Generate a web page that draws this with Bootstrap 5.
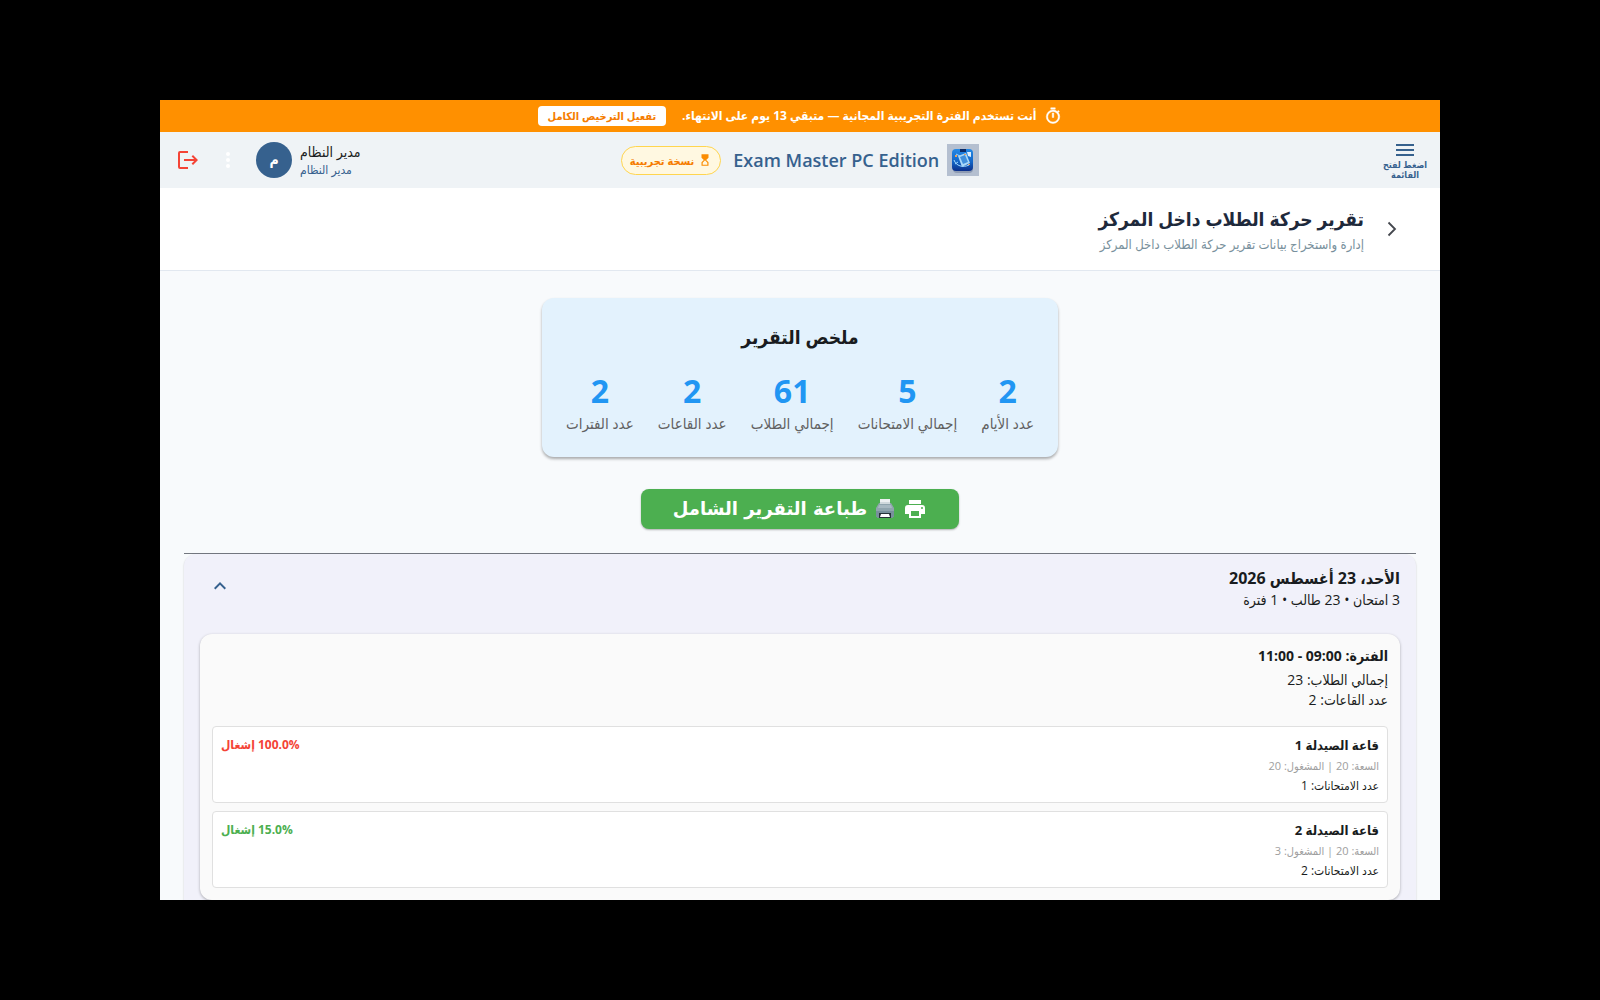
<!DOCTYPE html>
<html lang="ar" dir="rtl">
<head>
<meta charset="utf-8">
<meta name="viewport" content="width=device-width, initial-scale=1">
<title>Exam Master PC Edition</title>
<link href="https://cdn.jsdelivr.net/npm/bootstrap@5.3.0/dist/css/bootstrap.min.css" rel="stylesheet">
<style>
  :root { --brand: #36618e; --ink: #191c20; }
  body { background: #000; color: var(--ink); font-family: "Open Sans", "DejaVu Sans Condensed", "DejaVu Sans", sans-serif; font-size: 14px; line-height: 20px; padding: 10vh 10vw; height: 100vh; overflow: hidden; }
  button { color: inherit; }
  svg { display: block; flex: none; }
  .app-window { height: 80vh; background: #f8fafc; }
  .trial-bar { background: #ff9000; color: #fff; height: 32px; font-size: 12px; font-weight: 700; }
  .activate-btn { background: #fff; color: #f57c00; font-size: 11px; font-weight: 700; line-height: 20px; padding: 0 10px; border: 0; border-radius: 4px; }
  .top-bar { background: #eff3f6; height: 56px; }
  .menu-btn { color: var(--brand); font-size: 9px; font-weight: 700; line-height: 10px; width: 70px; }
  .brand-name { color: var(--brand); font-size: 18px; font-weight: 600; line-height: 32px; }
  .trial-tag { background: #fff8e1; border: 1px solid #ffd54f; border-radius: 15px; color: #f57c00; font-size: 11px; font-weight: 700; line-height: 27px; padding: 0 8px; }
  .user-avatar { width: 36px; height: 36px; background: var(--brand); font-size: 14px; }
  .user-role { color: var(--brand); font-size: 12px; line-height: 16px; }
  .page-head { background: #fff; border-bottom: 1px solid #e2e8f0; padding: 16px 36px; }
  .page-title { color: #1e293b; font-size: 19px; font-weight: 700; line-height: 30px; }
  .page-sub { color: #78909c; font-size: 13px; }
  .summary-card { background: #e3f2fd; border-radius: 12px; width: 516px; max-width: 100%; padding: 24px; margin: 27px 0 32px; box-shadow: 0 2px 3px rgba(0,0,0,.32); }
  .summary-title { font-size: 19px; font-weight: 700; line-height: 30px; }
  .stat-value { color: #2196f3; font-size: 32px; font-weight: 700; line-height: 45px; }
  .stat-label { color: #616161; font-size: 15px; }
  .print-btn { background: #4caf50; color: #fff; border: 0; border-radius: 8px; font-family: "DejaVu Sans", sans-serif; font-size: 18px; font-weight: 700; line-height: 40px; padding: 0 32px; box-shadow: 0 1px 2px rgba(0,0,0,.3); }
  .day-list { border-top: 1px solid #73777f; }
  .day-panel { background: #f1f1fa; border-radius: 12px; padding: 12px 16px 16px; box-shadow: 0 1px 2px rgba(0,0,0,.2); }
  .day-title { font-size: 16px; font-weight: 700; line-height: 24px; }
  .slot-card { background: #fafafa; border-radius: 12px; padding: 12px; box-shadow: 0 1px 3px rgba(0,0,0,.3); }
  .slot-title { font-size: 14px; font-weight: 700; line-height: 20px; }
  .fine-text { font-size: 14px; }
  .room-box { background: #fff; border: 1px solid #e0e0e0; border-radius: 4px; padding: 8px 8px 6px; }
  .room-title { font-size: 13px; font-weight: 700; line-height: 21px; }
  .room-line { font-size: 12px; }
  .room-seats { color: #9e9e9e; font-size: 11px; }
  .load-text { font-size: 12px; font-weight: 700; }
  .load-full { color: #f44336; }
  .load-low { color: #4caf50; }
</style>
<script src="https://cdn.jsdelivr.net/npm/bootstrap@5.3.0/dist/js/bootstrap.bundle.min.js"></script>
</head>
<body>
<div class="app-window overflow-hidden">
  <div class="trial-bar d-flex justify-content-center align-items-center gap-3">
    <div class="d-flex align-items-center gap-2">
      <svg width="18" height="18" viewBox="0 0 24 24" fill="#fff" stroke="#fff" stroke-width=".6"><path d="M15 1H9v2h6V1zm-4 13h2V8h-2v6zm8.030-6.610 1.420-1.420c-.43-.51-.9-.99-1.410-1.410l-1.420 1.420A8.960 8.960 0 0 0 12 4a9 9 0 1 0 9 9c0-2.120-.74-4.070-1.970-5.610zM12 20a7 7 0 1 1 0-14 7 7 0 0 1 0 14z"/></svg>
      <span>أنت تستخدم الفترة التجريبية المجانية — متبقي 13 يوم على الانتهاء.</span>
    </div>
    <button type="button" class="activate-btn">تفعيل الترخيص الكامل</button>
  </div>

  <header class="top-bar d-flex align-items-center">
    <div class="col">
      <button type="button" class="menu-btn btn p-0 pt-1 border-0 d-flex flex-column align-items-center gap-1">
        <svg width="18" height="12" viewBox="0 0 18 12" fill="#36618e"><path d="M0 0h18v2H0zM0 5h18v2H0zM0 10h18v2H0z"/></svg>
        <span>اضغط لفتح<br>القائمة</span>
      </button>
    </div>
    <div class="d-flex align-items-center gap-2">
      <svg width="32" height="32" viewBox="0 0 32 32">
        <defs><linearGradient id="tile" x1="0" y1="0" x2="0" y2="1"><stop offset="0" stop-color="#2389e6"/><stop offset=".6" stop-color="#1263c4"/><stop offset="1" stop-color="#0b2f8a"/></linearGradient></defs>
        <path fill="#b4bfd0" d="M0 0h32v32H0z"/>
        <rect x="6" y="7" width="20" height="22" rx="4" fill="#8e9bb3"/>
        <rect x="5" y="5" width="21" height="22" rx="4" fill="url(#tile)"/>
        <path fill="#0b2a66" d="M13 5h6v3h-6z"/>
        <path fill="#a9d8f8" d="m11 12 8-3 4 10-8 4z"/>
        <path fill="#3f8fdc" d="m13 13 5-2 3 7-5 2z"/>
        <path fill="#dbeeff" d="M20 8h4v5l-3-1z"/>
        <path fill="#e9a15a" d="M8 11h2v2H8zM21 20h2v1h-2zM17 10h2v1h-2z"/>
        <path stroke="#9fd8ff" fill="none" d="M7 16c2 6 9 8 15 5M9 10l4 2M8 20l3-2"/>
      </svg>
      <span class="brand-name" dir="ltr">Exam Master PC Edition</span>
      <span class="trial-tag d-flex align-items-center gap-1 me-1">
        <svg width="14" height="14" viewBox="0 0 24 24" fill="#fb8c00"><path d="M18 22v-6l-4-4 4-4V2H6v6l4 4-4 4v6h12zM8 16.500l4-4 4 4V20H8z"/></svg>
        <span>نسخة تجريبية</span>
      </span>
    </div>
    <div class="col d-flex justify-content-end align-items-center">
      <div class="d-flex flex-column align-items-end">
        <span>مدير النظام</span>
        <span class="user-role">مدير النظام</span>
      </div>
      <span class="user-avatar rounded-circle text-white fw-bold d-flex justify-content-center align-items-center mx-2">م</span>
      <button type="button" class="btn p-2 border-0" aria-label="المزيد"><svg width="24" height="24" viewBox="0 0 24 24" fill="#fff"><path d="M12 8a2 2 0 1 0 0-4 2 2 0 0 0 0 4zm0 2a2 2 0 1 0 0 4 2 2 0 0 0 0-4zm0 6a2 2 0 1 0 0 4 2 2 0 0 0 0-4z"/></svg></button>
      <button type="button" class="btn p-2 border-0 ms-2" aria-label="خروج"><svg width="24" height="24" viewBox="0 0 24 24" fill="#f44336"><path d="m17 7-1.410 1.410L18.170 11H8v2h10.170l-2.580 2.580L17 17l5-5zM4 5h8V3H4a2 2 0 0 0-2 2v14a2 2 0 0 0 2 2h8v-2H4z"/></svg></button>
    </div>
  </header>

  <div class="page-head d-flex align-items-center gap-3">
    <button type="button" class="btn p-0 border-0" aria-label="رجوع"><svg width="24" height="24" viewBox="0 0 24 24" fill="none" stroke="#44474e" stroke-width="1.800"><path d="m8.500 5.500 6.500 6.500-6.500 6.500"/></svg></button>
    <div>
      <h1 class="page-title m-0">تقرير حركة الطلاب داخل المركز</h1>
      <p class="page-sub m-0">إدارة واستخراج بيانات تقرير حركة الطلاب داخل المركز</p>
    </div>
  </div>

  <main class="px-4 d-flex flex-column">
    <section class="summary-card align-self-center">
      <h2 class="summary-title text-center mb-3">ملخص التقرير</h2>
      <div class="d-flex justify-content-between text-center">
        <div><div class="stat-value">2</div><div class="stat-label">عدد الأيام</div></div>
        <div><div class="stat-value">5</div><div class="stat-label">إجمالي الامتحانات</div></div>
        <div><div class="stat-value">61</div><div class="stat-label">إجمالي الطلاب</div></div>
        <div><div class="stat-value">2</div><div class="stat-label">عدد القاعات</div></div>
        <div><div class="stat-value">2</div><div class="stat-label">عدد الفترات</div></div>
      </div>
    </section>

    <button type="button" class="print-btn align-self-center d-flex align-items-center gap-2 mb-4">
      <svg width="24" height="24" viewBox="0 0 24 24" fill="#fff"><path fill-rule="evenodd" d="M19 8H5a3 3 0 0 0-3 3v6h4v4h12v-4h4v-6a3 3 0 0 0-3-3zm-3 11H8v-5h8v5zm3-7a1 1 0 1 1 0-2 1 1 0 0 1 0 2zM18 3H6v4h12V3z"/></svg>
      <svg width="20" height="20" viewBox="0 0 20 20"><path fill="#eceff1" d="M5 0h10v6H5z"/><path fill="#cfd8dc" d="M5 3h10v3H5z"/><path fill="#90a4ae" d="M4 4h1v1h10V4h1l3 5v8l-2 2H3l-2-2V9z"/><path fill="#78909c" d="M1 12h18v5l-2 2H3l-2-2z"/><path fill="#a7b8c1" d="M4 6h12l1 3H3z"/><path fill="#263238" d="M4 14h12v5H4z"/><path fill="#fff" d="M6 15h8l1 3H5z"/></svg>
      <span>طباعة التقرير الشامل</span>
    </button>

    <div class="day-list">
      <section class="day-panel">
        <div class="d-flex align-items-start justify-content-between pb-4">
          <div>
            <h3 class="day-title m-0">الأحد، 23 أغسطس 2026</h3>
            <p class="fine-text m-0">3 امتحان • 23 طالب • 1 فترة</p>
          </div>
          <button type="button" class="btn p-2 border-0" aria-label="طي"><svg width="24" height="24" viewBox="0 0 24 24" fill="#36618e"><path d="m12 8-6 6 1.410 1.410L12 10.830l4.590 4.580L18 14z"/></svg></button>
        </div>
        <div class="slot-card">
          <h4 class="slot-title m-0">الفترة: 09:00 - 11:00</h4>
          <p class="fine-text m-0 mt-1">إجمالي الطلاب: 23</p>
          <p class="fine-text m-0">عدد القاعات: 2</p>
          <div class="d-flex flex-column gap-2 mt-3">
            <div class="room-box d-flex justify-content-between">
              <div>
                <h5 class="room-title m-0">قاعة الصيدلة 1</h5>
                <p class="room-seats m-0">السعة: 20 | المشغول: 20</p>
                <p class="room-line m-0">عدد الامتحانات: 1</p>
              </div>
              <span class="load-text load-full">100.0% إشغال</span>
            </div>
            <div class="room-box d-flex justify-content-between">
              <div>
                <h5 class="room-title m-0">قاعة الصيدلة 2</h5>
                <p class="room-seats m-0">السعة: 20 | المشغول: 3</p>
                <p class="room-line m-0">عدد الامتحانات: 2</p>
              </div>
              <span class="load-text load-low">15.0% إشغال</span>
            </div>
          </div>
        </div>
      </section>
    </div>
  </main>
</div>
</body>
</html>
